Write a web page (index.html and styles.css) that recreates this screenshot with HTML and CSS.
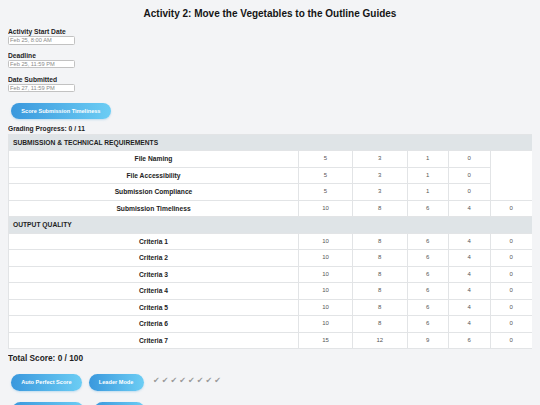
FILE: index.html
```html
<!DOCTYPE html>
<html lang="en">
<head>
<meta charset="utf-8">
<title>Activity 2 Grading</title>
<link rel="stylesheet" href="styles.css">
</head>
<body>
<h1 class="title">Activity 2: Move the Vegetables to the Outline Guides</h1>

<div class="fields">
  <div class="field">
    <label class="field-label">Activity Start Date</label>
    <input class="field-input" type="text" value="Feb 25, 8:00 AM" readonly>
  </div>
  <div class="field">
    <label class="field-label">Deadline</label>
    <input class="field-input" type="text" value="Feb 25, 11:59 PM" readonly>
  </div>
  <div class="field">
    <label class="field-label">Date Submitted</label>
    <input class="field-input" type="text" value="Feb 27, 11:59 PM" readonly>
  </div>
</div>

<div class="timeliness">
  <button class="btn">Score Submission Timeliness</button>
</div>

<div class="progress">Grading Progress: 0 / 11</div>

<table class="rubric">
  <colgroup>
    <col class="col-label">
    <col class="col-a">
    <col class="col-b">
    <col class="col-c">
    <col class="col-d">
    <col class="col-e">
  </colgroup>
  <tr class="section"><td colspan="6">SUBMISSION &amp; TECHNICAL REQUIREMENTS</td></tr>
  <tr><td class="crit">File Naming</td><td>5</td><td>3</td><td>1</td><td>0</td></tr>
  <tr><td class="crit">File Accessibility</td><td>5</td><td>3</td><td>1</td><td>0</td></tr>
  <tr><td class="crit">Submission Compliance</td><td>5</td><td>3</td><td>1</td><td>0</td></tr>
  <tr><td class="crit">Submission Timeliness</td><td>10</td><td>8</td><td>6</td><td>4</td><td>0</td></tr>
  <tr class="section"><td colspan="6">OUTPUT QUALITY</td></tr>
  <tr><td class="crit">Criteria 1</td><td>10</td><td>8</td><td>6</td><td>4</td><td>0</td></tr>
  <tr><td class="crit">Criteria 2</td><td>10</td><td>8</td><td>6</td><td>4</td><td>0</td></tr>
  <tr><td class="crit">Criteria 3</td><td>10</td><td>8</td><td>6</td><td>4</td><td>0</td></tr>
  <tr><td class="crit">Criteria 4</td><td>10</td><td>8</td><td>6</td><td>4</td><td>0</td></tr>
  <tr><td class="crit">Criteria 5</td><td>10</td><td>8</td><td>6</td><td>4</td><td>0</td></tr>
  <tr><td class="crit">Criteria 6</td><td>10</td><td>8</td><td>6</td><td>4</td><td>0</td></tr>
  <tr><td class="crit">Criteria 7</td><td>15</td><td>12</td><td>9</td><td>6</td><td>0</td></tr>
</table>

<div class="total">Total Score: 0 / 100</div>

<div class="btn-row">
  <button class="btn">Auto Perfect Score</button>
  <button class="btn">Leader Mode</button>
  <div class="checks"><span>✔</span><span>✔</span><span>✔</span><span>✔</span><span>✔</span><span>✔</span><span>✔</span><span>✔</span></div>
</div>

<div class="btn-row btn-row-2">
  <button class="btn">Export Score Sheet</button>
  <button class="btn">Save Grade</button>
</div>
</body>
</html>
```

FILE: styles.css
```css
html, body {
  overflow: hidden;
}

body {
  margin: 8px;
  background: #f3f4f6;
  font-family: "Liberation Sans", Arial, sans-serif;
  color: #1e1e1e;
}

.title {
  margin: 0;
  font-size: 10px;
  line-height: 12px;
  font-weight: bold;
  text-align: center;
  color: #151515;
}

.fields {
  margin-top: 8.2px;
  display: flex;
  flex-direction: column;
  gap: 7.3px;
}

.field {
  display: flex;
  flex-direction: column;
  align-items: flex-start;
}

.field-label {
  font-size: 6.7px;
  line-height: 8px;
  font-weight: bold;
  color: #1e1e1e;
}

.field-input {
  box-sizing: border-box;
  width: 67px;
  height: 8.5px;
  margin: 0;
  padding: 0 1px;
  border: 1px solid #c2c2c2;
  border-radius: 1.5px;
  background: #ffffff;
  font-family: "Liberation Sans", Arial, sans-serif;
  font-size: 5.7px;
  color: #8a8a8a;
  outline: none;
}

.timeliness {
  margin-top: 10.3px;
  padding-left: 3px;
  display: flex;
}

.btn {
  display: inline-flex;
  align-items: center;
  justify-content: center;
  box-sizing: border-box;
  height: 16.7px;
  margin: 0;
  padding: 0 10.3px;
  border: none;
  border-radius: 9px;
  background: linear-gradient(90deg, #3a98dd, #6ccdf4);
  box-shadow: 0 1px 2px rgba(52, 152, 219, 0.25);
  color: #ffffff;
  font-family: "Liberation Sans", Arial, sans-serif;
  font-size: 5.6px;
  font-weight: bold;
  white-space: nowrap;
}

.progress {
  margin-top: 5.8px;
  font-size: 6.7px;
  line-height: 8px;
  font-weight: bold;
}

.rubric {
  margin-top: 0.5px;
  width: 524px;
  table-layout: fixed;
  border-collapse: collapse;
  background: #ffffff;
  border: 1px solid #e2e4e6;
}

.col-label { width: 290px; }
.col-a { width: 54px; }
.col-b { width: 54.5px; }
.col-c { width: 41.5px; }
.col-d { width: 41.5px; }
.col-e { width: 42.5px; }

.rubric td {
  border: 1px solid #e2e4e6;
  padding: 4px;
  height: 7.5px;
  line-height: 7.5px;
  font-size: 6px;
  color: #555555;
  text-align: center;
  white-space: nowrap;
}

.rubric td.crit {
  font-size: 6.7px;
  font-weight: bold;
  color: #222222;
}

.rubric .section td {
  background: #dfe4e7;
  text-align: left;
  font-size: 6.7px;
  font-weight: bold;
  color: #1e1e1e;
}

.total {
  margin-top: 4px;
  font-size: 8.3px;
  line-height: 10px;
  font-weight: bold;
}

.btn-row {
  margin-top: 11px;
  padding-left: 3px;
  display: flex;
  align-items: center;
  gap: 6.6px;
}

.btn-row-2 {
  margin-top: 11.7px;
  padding-left: 3.7px;
  gap: 10px;
}

.checks {
  display: flex;
  margin-left: 2.7px;
  margin-top: -4px;
}

.checks span {
  display: inline-block;
  width: 8.75px;
  font-family: "DejaVu Sans", sans-serif;
  font-size: 8px;
  line-height: 9px;
  color: #999999;
}
```
